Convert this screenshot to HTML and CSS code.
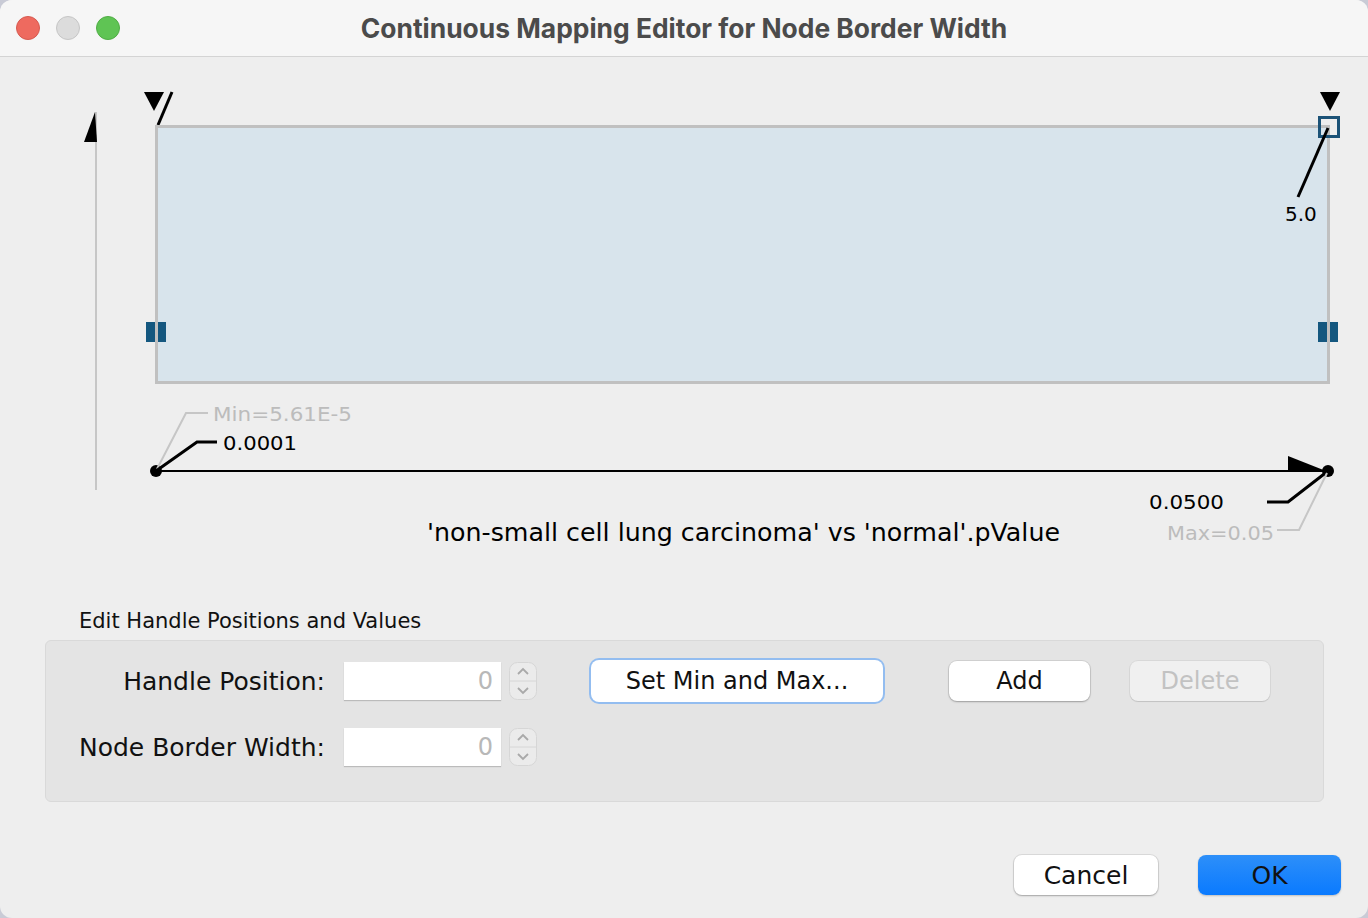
FILE: index.html
```html
<!DOCTYPE html>
<html>
<head>
<meta charset="utf-8">
<title>Continuous Mapping Editor for Node Border Width</title>
<link rel="stylesheet" href="styles.css">
</head>
<body>
<div class="window">
  <div class="titlebar">
    <div class="lights">
      <span class="light red"></span>
      <span class="light gray"></span>
      <span class="light green"></span>
    </div>
    <div class="title">Continuous Mapping Editor for Node Border Width</div>
  </div>

  <svg class="chart" width="1368" height="543" viewBox="0 57 1368 543" xmlns="http://www.w3.org/2000/svg">
    <!-- vertical axis -->
    <line x1="96" y1="112" x2="96" y2="490" stroke="#c6c6c6" stroke-width="2"/>
    <polygon points="95,112 84,142 97,142" fill="#000"/>

    <!-- top-left handle marker -->
    <polygon points="144,92 164,92 154,111" fill="#000"/>
    <line x1="172" y1="92" x2="158" y2="125" stroke="#000" stroke-width="3"/>

    <!-- mapping area -->
    <rect x="156.5" y="126.5" width="1172" height="256" fill="#d8e4ec" stroke="#c0c0c0" stroke-width="3"/>
    <rect x="146" y="322" width="20" height="20" fill="#14577f"/>
    <rect x="1318" y="322" width="20" height="20" fill="#14577f"/>
    <line x1="156.5" y1="320" x2="156.5" y2="344" stroke="#c0c0c0" stroke-width="3"/>
    <line x1="1328.5" y1="320" x2="1328.5" y2="344" stroke="#c0c0c0" stroke-width="3"/>

    <!-- top-right handle -->
    <polygon points="1320,92 1340,92 1330,111" fill="#000"/>
    <rect x="1319.5" y="117.5" width="19" height="19" fill="none" stroke="#1b5277" stroke-width="3"/>
    <line x1="1328" y1="128" x2="1298" y2="197" stroke="#000" stroke-width="3"/>
    <text class="lbl" x="1285" y="221">5.0</text>

    <!-- horizontal axis -->
    <line x1="156" y1="471" x2="1300" y2="471" stroke="#000" stroke-width="2"/>
    <polygon points="1288,456 1326,471 1326,472 1288,472" fill="#000"/>
    <circle cx="156" cy="471" r="6" fill="#000"/>
    <circle cx="1328" cy="471" r="6" fill="#000"/>

    <!-- left labels -->
    <polyline points="157,469 186,413 208,413" fill="none" stroke="#c6c6c6" stroke-width="2"/>
    <text class="lbl dim" x="213" y="421" textLength="139" lengthAdjust="spacingAndGlyphs">Min=5.61E-5</text>
    <polyline points="156,471 197,442 217,442" fill="none" stroke="#000" stroke-width="3"/>
    <text class="lbl" x="223" y="450" textLength="74" lengthAdjust="spacingAndGlyphs">0.0001</text>

    <!-- right labels -->
    <polyline points="1267,502 1288,502 1328,471" fill="none" stroke="#000" stroke-width="3"/>
    <text class="lbl" x="1149" y="509" textLength="75" lengthAdjust="spacingAndGlyphs">0.0500</text>
    <polyline points="1277,530 1299,530 1327,473" fill="none" stroke="#c6c6c6" stroke-width="2"/>
    <text class="lbl dim" x="1167" y="540" textLength="107" lengthAdjust="spacingAndGlyphs">Max=0.05</text>

    <text class="axis-title" x="427" y="541" textLength="633" lengthAdjust="spacingAndGlyphs">'non-small cell lung carcinoma' vs 'normal'.pValue</text>
  </svg>

  <div class="section-label">Edit Handle Positions and Values</div>

  <div class="panel">
    <div class="row">
      <label class="field-label">Handle Position:</label>
      <div class="field">0</div>
      <div class="spinner">
        <svg width="28" height="38" viewBox="0 0 28 38">
          <rect x="0.5" y="0.5" width="27" height="37" rx="8" fill="#ebebeb" stroke="#d6d6d6"/>
          <line x1="1" y1="19" x2="27" y2="19" stroke="#d6d6d6"/>
          <polyline points="9,12 14,7 19,12" fill="none" stroke="#a9a9a9" stroke-width="1.8"/>
          <polyline points="9,26 14,31 19,26" fill="none" stroke="#a9a9a9" stroke-width="1.8"/>
        </svg>
      </div>
      <button class="btn focus set-min">Set Min and Max...</button>
      <button class="btn add">Add</button>
      <button class="btn disabled delete">Delete</button>
    </div>
    <div class="row row2">
      <label class="field-label">Node Border Width:</label>
      <div class="field">0</div>
      <div class="spinner">
        <svg width="28" height="38" viewBox="0 0 28 38">
          <rect x="0.5" y="0.5" width="27" height="37" rx="8" fill="#ebebeb" stroke="#d6d6d6"/>
          <line x1="1" y1="19" x2="27" y2="19" stroke="#d6d6d6"/>
          <polyline points="9,12 14,7 19,12" fill="none" stroke="#a9a9a9" stroke-width="1.8"/>
          <polyline points="9,26 14,31 19,26" fill="none" stroke="#a9a9a9" stroke-width="1.8"/>
        </svg>
      </div>
    </div>
  </div>

  <div class="footer">
    <button class="btn cancel">Cancel</button>
    <button class="btn primary">OK</button>
  </div>
</div>
</body>
</html>
```
FILE: styles.css
```css
html, body {
  margin: 0;
  padding: 0;
  background: #c9cbd6;
}

.window {
  width: 1368px;
  height: 918px;
  background: #eeeeee;
  border-radius: 12px;
  overflow: hidden;
  display: flex;
  flex-direction: column;
  font-family: "DejaVu Sans", "Liberation Sans", sans-serif;
  color: #111;
}

.titlebar {
  height: 56px;
  flex: none;
  background: #f6f6f6;
  border-bottom: 1px solid #d4d4d4;
  display: flex;
  align-items: center;
  position: relative;
}

.lights {
  display: flex;
  gap: 16px;
  padding-left: 16px;
}

.light {
  width: 24px;
  height: 24px;
  border-radius: 50%;
  box-sizing: border-box;
  border: 1px solid;
}

.light.red { background: #ee6a5f; border-color: #d65a50; }
.light.gray { background: #dcdcdc; border-color: #c6c6c6; }
.light.green { background: #5fc454; border-color: #50ad45; }

.title {
  position: absolute;
  left: 0;
  right: 0;
  top: 0;
  line-height: 56px;
  text-align: center;
  font-family: Inter, "Liberation Sans", sans-serif;
  font-weight: 700;
  font-size: 26.4px;
  color: #4b4b4b;
  pointer-events: none;
}

.chart {
  display: block;
  flex: none;
}

.lbl {
  font-family: "DejaVu Sans", sans-serif;
  font-size: 20px;
  fill: #000;
}

.lbl.dim {
  fill: #bcbcbc;
}

.axis-title {
  font-family: "DejaVu Sans", sans-serif;
  font-size: 24px;
  fill: #000;
}

.section-label {
  margin: 7px 0 0 79px;
  font-size: 21px;
  line-height: 28px;
  height: 28px;
}

.panel {
  margin: 5px 44px 0 45px;
  height: 162px;
  box-sizing: border-box;
  background: #e4e4e4;
  border: 1px solid #d9d9d9;
  border-radius: 6px;
  padding-top: 19px;
}

.row {
  display: flex;
  align-items: center;
  height: 42px;
}

.row2 {
  margin-top: 24px;
}

.field-label {
  width: 279px;
  text-align: right;
  font-size: 25px;
  color: #111;
  margin-right: 19px;
}

.field {
  width: 157px;
  height: 38px;
  box-sizing: border-box;
  background: #fff;
  box-shadow: 0 1px 1px rgba(0, 0, 0, 0.18);
  text-align: right;
  padding-right: 8px;
  font-size: 24px;
  line-height: 38px;
  color: #b8b8b8;
}

.spinner {
  margin-left: 8px;
  width: 28px;
  height: 38px;
}

.spinner svg {
  display: block;
}

.btn {
  font-family: "DejaVu Sans", sans-serif;
  font-size: 24px;
  color: #111;
  background: #fff;
  border: none;
  border-radius: 8px;
  box-shadow: 0 0 0 1px rgba(0, 0, 0, 0.08), 0 1px 2px rgba(0, 0, 0, 0.25);
  height: 40px;
  padding: 0;
  box-sizing: border-box;
}

.btn.focus {
  box-shadow: 0 0 0 2px #93bdf0;
}

.set-min {
  margin-left: 54px;
  width: 292px;
  height: 42px;
}

.add {
  margin-left: 66px;
  width: 141px;
}

.delete {
  margin-left: 40px;
  width: 140px;
}

.btn.disabled {
  background: #f0f0f0;
  color: #c2c2c2;
  box-shadow: 0 0 0 1px rgba(0, 0, 0, 0.05), 0 1px 1px rgba(0, 0, 0, 0.1);
}

.footer {
  display: flex;
  justify-content: flex-end;
  gap: 40px;
  padding-right: 27px;
  margin-top: 53px;
}

.cancel {
  width: 144px;
  font-size: 25px;
}

.primary {
  width: 143px;
  font-size: 25px;
  background: linear-gradient(#2d8ff9, #0a7aff);
  box-shadow: 0 1px 2px rgba(0, 0, 0, 0.2);
  color: #111;
}
```
